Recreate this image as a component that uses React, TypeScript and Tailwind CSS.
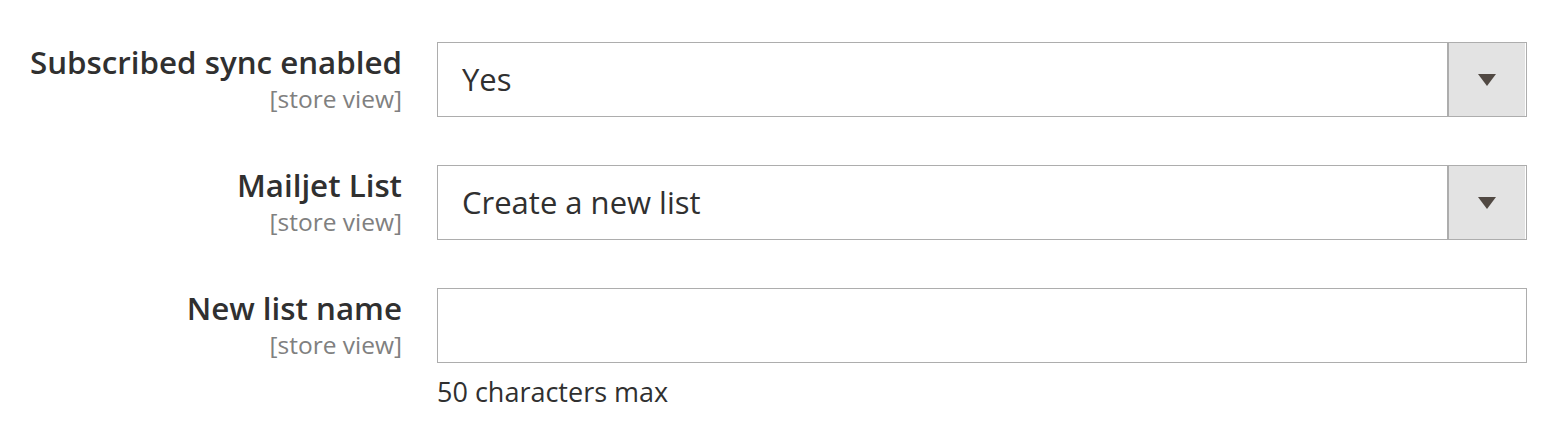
import React from "react";

interface Field {
  label: string;
  kind: "select" | "text";
  value?: string;
  note?: string;
}

const fields: Field[] = [
  { label: "Subscribed sync enabled", kind: "select", value: "Yes" },
  { label: "Mailjet List", kind: "select", value: "Create a new list" },
  { label: "New list name", kind: "text", note: "50 characters max" },
];

function SelectBox({ value }: { value: string }) {
  return (
    <div className="flex h-[75px] border border-[#adadad] bg-white">
      <div className="flex flex-1 items-center pl-[24px] text-[31px] text-[#303030]">
        {value}
      </div>
      <div className="flex w-[78px] items-center justify-center border-l-2 border-[#adadad] bg-[#e3e3e3] mr-px">
        <svg width="18" height="12" viewBox="0 0 18 12">
          <path d="M0 0H18L9 12Z" fill="#514943" />
        </svg>
      </div>
    </div>
  );
}

export default function App() {
  return (
    <div
      className="w-[1564px] h-[444px] bg-white pt-[42px]"
      style={{ fontFamily: '"Open Sans", sans-serif' }}
    >
      <div className="flex flex-col gap-[48px]">
        {fields.map((f) => (
          <div key={f.label} className="flex gap-[35px]">
            <div className="w-[402px] shrink-0 text-right">
              <div className="text-[31.3px] font-semibold leading-[40px] text-[#303030]">
                {f.label}
              </div>
              <div className="text-[24.5px] leading-[33px] text-[#808080]">
                [store view]
              </div>
            </div>
            <div className="w-[1090px]">
              {f.kind === "select" ? (
                <SelectBox value={f.value ?? ""} />
              ) : (
                <div className="h-[75px] border border-[#adadad] bg-white" />
              )}
              {f.note && (
                <div className="pt-[10px] text-[27px] leading-[38px] text-[#303030]">
                  {f.note}
                </div>
              )}
            </div>
          </div>
        ))}
      </div>
    </div>
  );
}
